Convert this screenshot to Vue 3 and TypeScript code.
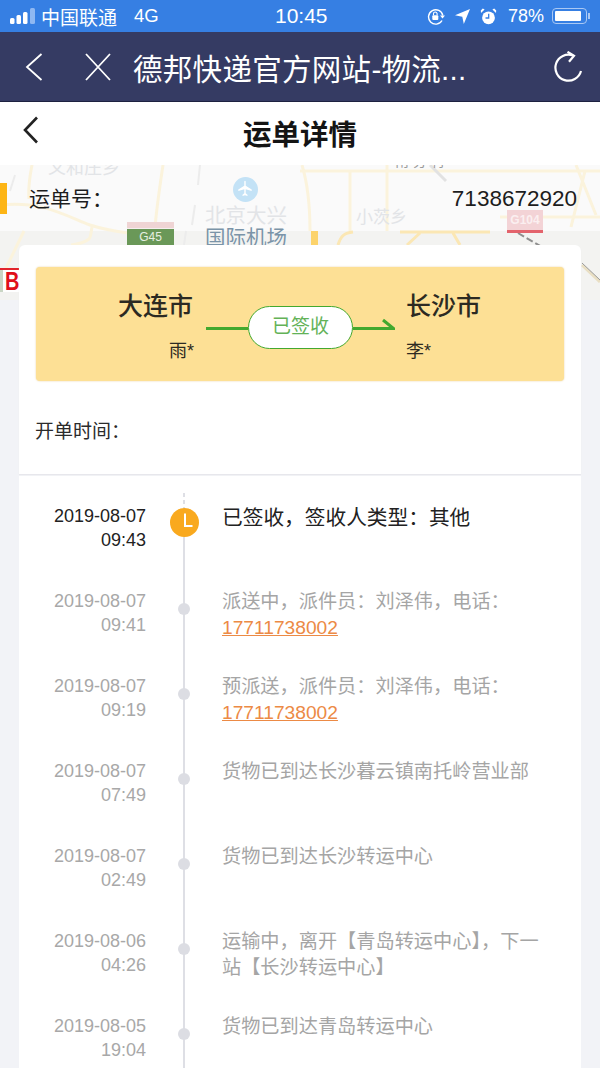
<script setup lang="ts">
// Suivi de colis : les lignes de la timeline viennent d'un tableau
interface TrackRow {
  date: string
  time: string
  text: string
  phone?: string
}

const rows: TrackRow[] = [
  { date: '2019-08-07', time: '09:43', text: '已签收，签收人类型：其他' },
  { date: '2019-08-07', time: '09:41', text: '派送中，派件员：刘泽伟，电话：', phone: '17711738002' },
  { date: '2019-08-07', time: '09:19', text: '预派送，派件员：刘泽伟，电话：', phone: '17711738002' },
  { date: '2019-08-07', time: '07:49', text: '货物已到达长沙暮云镇南托岭营业部' },
  { date: '2019-08-07', time: '02:49', text: '货物已到达长沙转运中心' },
  { date: '2019-08-06', time: '04:26', text: '运输中，离开【青岛转运中心】，下一站【长沙转运中心】' },
  { date: '2019-08-05', time: '19:04', text: '货物已到达青岛转运中心' },
]
</script>

<template>
  <div class="page">
    <div class="status">
      <div class="status-left">
        <svg width="25" height="16" viewBox="0 0 25 16">
          <rect x="0" y="10" width="4.500" height="6" rx="1.500" fill="#fff" />
          <rect x="6.500" y="7" width="4.500" height="9" rx="1.500" fill="#fff" />
          <rect x="13" y="4" width="4.500" height="12" rx="1.500" fill="#fff" />
          <rect x="20" y="0" width="5" height="16" rx="1.500" fill="#8fb8f2" />
        </svg>
        <span class="carrier">中国联通</span>
        <span class="net">4G</span>
      </div>
      <div class="clock">10:45</div>
      <div class="status-right">
        <svg width="18" height="17" viewBox="0 0 18 17" fill="none" stroke="#fff">
          <path d="M15 12.500A7.200 7.200 0 1 1 15.800 7.500" stroke-width="1.400" />
          <path d="M13 7.500h5l-2.500 3z" fill="#fff" stroke="none" />
          <rect x="5.300" y="7.300" width="6" height="4.700" rx="1" fill="#fff" stroke="none" />
          <path d="M6.500 7.300V5.800a1.800 1.800 0 0 1 3.600 0v1.500" stroke-width="1.100" />
        </svg>
        <svg class="gap-loc" width="15" height="15" viewBox="0 0 15 15">
          <path d="M15 0L8.800 15 7.300 7.700 0 6.300z" fill="#fff" />
        </svg>
        <svg class="gap-alarm" width="17" height="17" viewBox="0 0 17 17">
          <circle cx="8.500" cy="9.800" r="6.400" fill="#fff" />
          <path d="M8.700 5.800v4.200H5.500" fill="none" stroke="#367fe3" stroke-width="1.300" />
          <path d="M1 5L4.600 1.500 2.800.6.800 2.500zM16 5L12.400 1.500 14.200.6l2 1.900z" fill="#fff" />
        </svg>
        <span class="battery-text">78%</span>
        <span class="battery"><span class="battery-level" /></span>
        <span class="battery-tip" />
      </div>
    </div>

    <div class="browser">
      <svg width="18" height="28" viewBox="0 0 18 28" fill="none" stroke="#fff" stroke-width="1.800">
        <path d="M16.500 1L2 14l14.500 13" />
      </svg>
      <svg class="close" width="26" height="28" viewBox="0 0 26 28" fill="none" stroke="#fff" stroke-width="1.800">
        <path d="M1 1l24 26M25 1L1 27" />
      </svg>
      <div class="browser-title">德邦快递官方网站-物流...</div>
      <svg class="reload" width="30" height="32" viewBox="0 0 30 32" fill="none" stroke="#fff" stroke-width="2.200">
        <path d="M27 20A13 13 0 1 1 19 4.500" />
        <path d="M13.500 .8L20 4.800l-5 6" />
      </svg>
    </div>

    <div class="titlebar">
      <svg class="title-back" width="17" height="28" viewBox="0 0 17 28" fill="none" stroke="#222" stroke-width="2.600">
        <path d="M15 1.500L3 14l12 12.500" />
      </svg>
      <div class="title">运单详情</div>
    </div>

    <div class="content">
      <div class="map">
        <svg width="600" height="135" viewBox="0 0 600 135" fill="none">
          <rect width="600" height="135" fill="#fafafa" />
          <rect y="66" width="600" height="69" fill="#f3f3f1" />
          <g stroke="#fbf3dc" stroke-width="3">
            <path d="M163 0c-3 20-6 40-8 62M32 0c-2 10-4 22-3 34" />
            <path d="M0 40c40-4 60 8 90 20 12 4 24 6 38 8" />
            <path d="M92 62c-1 5-1 10-3 12-5 4-10 5-18 6" />
            <path d="M24 66L5 105" />
            <path d="M300 6h300M387 0v66M350 6v60M600 52H500" />
            <path d="M576 0l20 50M585 6l-14 56" />
            <path d="M302 0c6 20 8 45 8 66" />
          </g>
          <g stroke="#fbe7b4" stroke-width="3">
            <path d="M400 67h90M353 67c-8 1-12 3-15 13M420 68l-13 12M453 68l7 12" />
          </g>
          <path d="M200 0l-2 20M15 10L10 26M195 40l-3 20M186 66l-2 14" stroke="#ececec" stroke-width="2" />
          <path d="M430 0l16 16" stroke="#e2e2e2" stroke-width="3" />
          <rect x="311" y="66" width="7" height="14" fill="#fcd36b" />
          <path d="M518 68l24 14" stroke="#8e8e8e" stroke-width="2" stroke-dasharray="7 3" />
          <path d="M582 100l18 17" stroke="#e9dfc4" stroke-width="3" />
          <path d="M582 98l18 17" stroke="#9a9a9a" stroke-width="1" />
        </svg>
        <svg class="plane" width="25" height="25" viewBox="0 0 25 25">
          <circle cx="12.500" cy="12.500" r="12.500" fill="#c3e2f6" />
          <path d="M11.300 4.500c0-1 1.400-1 1.400 0v4.300l6 3.700v1.600l-6-1.800v4l1.800 1.400v1.200l-2.500-.7-2.500.7v-1.200l1.800-1.400v-4l-6 1.800v-1.600l6-3.700z" fill="#fff" />
        </svg>
        <span class="map-text t-wenhe">义和庄乡</span>
        <span class="map-text t-top">南 分 村</span>
        <span class="map-text t-bj">北京大兴</span>
        <span class="map-text t-airport">国际机场</span>
        <span class="map-text t-xiao">小茨乡</span>
        <span class="shield g45">G45</span>
        <span class="shield g104">G104</span>
        <span class="flag" />
        <span class="badge-b"><span class="badge-letter">B</span></span>
      </div>

      <div class="waybill">
        <span>运单号：</span>
        <span class="waybill-no">7138672920</span>
      </div>

      <div class="card summary">
        <div class="route">
          <div class="route-side route-from">
            <div class="city">大连市</div>
            <div class="person">雨*</div>
          </div>
          <div class="route-mid">
            <span class="route-line" />
            <span class="route-state">已签收</span>
            <svg class="route-arrow" width="42" height="14" viewBox="0 0 42 14" fill="none" stroke="#43a92f" stroke-width="3">
              <path d="M0 11.500h40.500L30 3" />
            </svg>
          </div>
          <div class="route-side">
            <div class="city">长沙市</div>
            <div class="person">李*</div>
          </div>
        </div>
        <div class="open-time">开单时间：</div>
      </div>

      <div class="card timeline">
        <div class="track-dash" />
        <div class="track-line" />
        <div v-for="(row, i) in rows" :key="i" class="row" :class="{ current: i === 0 }">
          <div class="row-time">
            <div>{{ row.date }}</div>
            <div>{{ row.time }}</div>
          </div>
          <div class="row-dot">
            <span v-if="i === 0" class="dot-now">
              <svg width="29" height="29" viewBox="0 0 29 29" fill="none">
                <path d="M15 5.500V18h7.500" stroke="#fff" stroke-width="2" />
              </svg>
            </span>
            <span v-else class="dot" />
          </div>
          <div class="row-text">
            {{ row.text }}
            <a v-if="row.phone" class="phone">{{ row.phone }}</a>
          </div>
        </div>
      </div>
    </div>
  </div>
</template>

<style>
html,
body {
  margin: 0;
  background: #f2f3f7;
}
</style>

<style scoped>
.page {
  width: 600px;
  height: 1068px;
  overflow: hidden;
  font-family: 'Liberation Sans', 'Noto Sans CJK SC', sans-serif;
  color: #222;
}
.status {
  height: 32px;
  background: #367fe3;
  color: #fff;
  display: flex;
  align-items: center;
  justify-content: space-between;
  padding: 0 10px;
  position: relative;
}
.status-left,
.status-right {
  display: flex;
  align-items: center;
}
.carrier {
  margin-left: 6px;
  font-size: 19px;
}
.net {
  margin-left: 17px;
  font-size: 18.500px;
}
.clock {
  position: absolute;
  left: 275px;
  top: 4px;
  font-size: 21px;
  line-height: 24px;
}
.gap-loc {
  margin-left: 10px;
}
.gap-alarm {
  margin-left: 10px;
}
.battery-text {
  margin-left: 11px;
  font-size: 18px;
}
.battery {
  margin-left: 8px;
  width: 35px;
  height: 16px;
  box-sizing: border-box;
  border: 1px solid #a9c8f4;
  border-radius: 4px;
  padding: 2px;
  display: block;
}
.battery-level {
  display: block;
  width: 26px;
  height: 10px;
  background: #fff;
  border-radius: 1px;
}
.battery-tip {
  width: 2px;
  height: 6px;
  margin-left: 1px;
  background: #a9c8f4;
}
.browser {
  height: 69px;
  padding-left: 25px;
  background: #353b63;
  border-bottom: 1px solid #1d2140;
  display: flex;
  align-items: center;
  color: #fff;
}
.close {
  margin-left: 42px;
}
.browser-title {
  margin-left: 22px;
  font-size: 29.500px;
  letter-spacing: 0.300px;
  white-space: nowrap;
}
.reload {
  margin-left: auto;
  margin-right: 16px;
}
.titlebar {
  height: 63px;
  background: #fff;
  position: relative;
  display: flex;
  align-items: center;
  justify-content: center;
}
.title-back {
  position: absolute;
  left: 22px;
  top: 14px;
}
.title {
  font-size: 28.500px;
  font-weight: 700;
  color: #141414;
  margin-top: -3px;
}
.content {
  position: relative;
  height: 903px;
  padding: 0 19px;
}
.map {
  position: absolute;
  left: 0;
  top: 0;
  width: 600px;
  height: 135px;
  overflow: hidden;
}
.plane {
  position: absolute;
  left: 233px;
  top: 12px;
}
.map-text {
  position: absolute;
  color: #e2e4e7;
  font-size: 20.500px;
  line-height: 24px;
  white-space: nowrap;
}
.t-wenhe {
  left: 48px;
  top: -9px;
  font-size: 18px;
}
.t-top {
  left: 395px;
  top: -16px;
  font-size: 14px;
  color: #9a9a9a;
}
.t-bj {
  left: 205px;
  top: 39px;
}
.t-airport {
  left: 205px;
  top: 61px;
  color: #7a94a8;
}
.t-xiao {
  left: 356px;
  top: 41px;
  font-size: 17px;
}
.shield {
  position: absolute;
  text-align: center;
  color: #e6efe0;
  font-size: 12px;
}
.g45 {
  left: 127px;
  top: 57px;
  width: 47px;
  height: 23px;
  line-height: 30px;
  background: linear-gradient(#efd4d4 0 6px, #f5eeee 6px 7px, #6a9858 7px);
}
.g104 {
  left: 507px;
  top: 45px;
  width: 36px;
  height: 20px;
  line-height: 20px;
  font-weight: 700;
  color: #fbeff0;
  background: #f3d3d6;
  border-bottom: 3px solid #e3636c;
}
.flag {
  position: absolute;
  left: 0;
  top: 18px;
  width: 7px;
  height: 31px;
  background: #fdb515;
}
.badge-b {
  position: absolute;
  left: 0;
  top: 103px;
  width: 14px;
  height: 22px;
  padding-left: 5px;
  background: #fff;
  border-top: 2px solid #e2242c;
  box-shadow: inset 3px 0 0 #c9d6c4;
  color: #e0101a;
  font-size: 25px;
  font-weight: 700;
  line-height: 23px;
  overflow: hidden;
}
.badge-letter {
  display: block;
  transform: scaleX(0.8);
  transform-origin: left center;
}
.waybill {
  position: relative;
  height: 80px;
  padding: 20px 4px 0 10px;
  box-sizing: border-box;
  display: flex;
  justify-content: space-between;
  font-size: 21px;
  line-height: 28px;
  color: #1d1d1d;
}
.waybill-no {
  font-size: 22.500px;
}
.card {
  position: relative;
  background: #fff;
}
.summary {
  height: 229px;
  border-radius: 6px 6px 0 0;
  padding: 22px 16px 0;
  box-sizing: border-box;
  margin-bottom: 2px;
  box-shadow: 0 1px 1px #e6e6ea;
}
.route {
  height: 114px;
  background: #fde095;
  border-radius: 4px;
  box-shadow: 0 0 2px #e7cfa0;
  display: flex;
  justify-content: center;
  padding-left: 4px;
  color: #2c2a22;
  margin: 0 1px;
}
.route-side {
  width: 80px;
  padding-top: 23px;
}
.route-from {
  text-align: right;
  width: 74px;
}
.route-from .person {
  margin-right: -2px;
}
.city {
  font-size: 25px;
  font-weight: 500;
  line-height: 32px;
  white-space: nowrap;
}
.person {
  font-size: 18px;
  line-height: 24px;
  margin-top: 17px;
}
.route-mid {
  width: 214px;
  box-sizing: border-box;
  padding: 39px 11px 0 14px;
  display: flex;
  align-items: flex-start;
}
.route-line {
  width: 42px;
  height: 3px;
  margin-top: 21px;
  background: #43a92f;
}
.route-arrow {
  margin-top: 11px;
  flex: none;
}
.route-state {
  flex: none;
  width: 105px;
  height: 43px;
  line-height: 40px;
  border: 1.500px solid #43a92f;
  box-sizing: border-box;
  border-radius: 22px;
  background: #fff;
  text-align: center;
  color: #63b257;
  font-size: 19px;
}
.open-time {
  margin-top: 38px;
  font-size: 19px;
  line-height: 26px;
  color: #2b2b2b;
}
.timeline {
  height: 640px;
  padding-top: 17px;
  box-sizing: border-box;
}
.track-line {
  position: absolute;
  left: 164px;
  top: 31px;
  bottom: 0;
  width: 2px;
  background: #dedfe5;
}
.track-dash {
  position: absolute;
  left: 164px;
  top: 17px;
  height: 14px;
  width: 2px;
  background: repeating-linear-gradient(#dedfe5 0 4px, transparent 4px 7px);
}
.row {
  height: 85px;
  display: flex;
  position: relative;
  color: #a8a8a8;
}
.row-time {
  width: 127px;
  padding-top: 11px;
  text-align: right;
  font-size: 18px;
  line-height: 24px;
}
.row-dot {
  width: 76px;
  display: flex;
  justify-content: center;
}
.dot {
  width: 12px;
  height: 12px;
  margin-top: 25px;
  border-radius: 50%;
  background: #dcdde3;
}
.dot-now {
  width: 29px;
  height: 29px;
  margin-top: 15px;
  border-radius: 50%;
  background: #f9a91e;
  display: block;
}
.row-text {
  width: 330px;
  padding-top: 11px;
  font-size: 19.200px;
  line-height: 26px;
  color: #a5a5a5;
}
.current .row-time {
  color: #222;
}
.current .row-text {
  color: #222;
  padding-top: 12px;
  font-size: 20.700px;
}
.phone {
  display: block;
  color: #ec8a45;
  text-decoration: underline;
}
</style>
